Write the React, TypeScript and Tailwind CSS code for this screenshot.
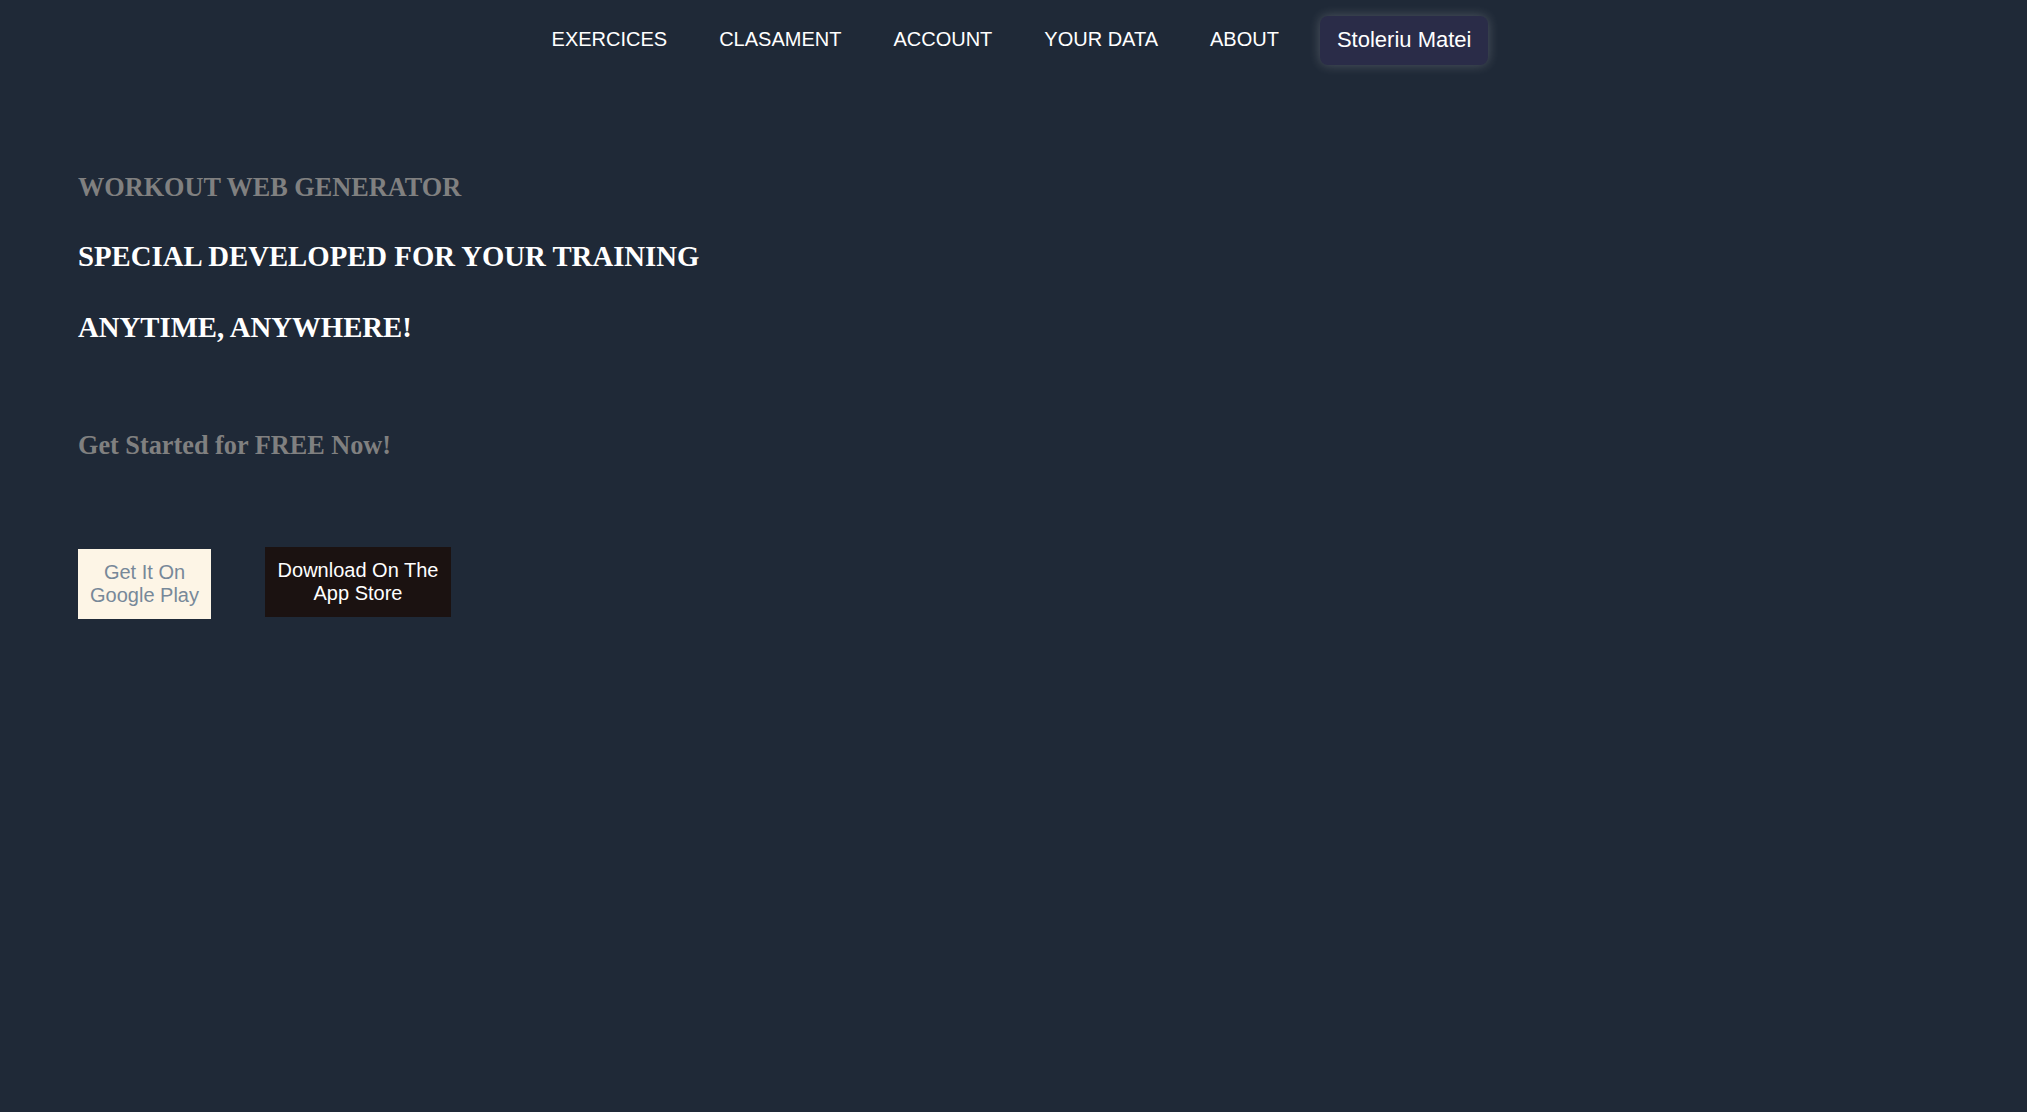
const links = ['EXERCICES', 'CLASAMENT', 'ACCOUNT', 'YOUR DATA', 'ABOUT'];

function Navbar() {
  return (
    <nav className="flex h-20 items-center justify-center font-['Liberation_Sans',Arial,sans-serif]">
      {links.map((link) => (
        <a key={link} href="#" className="px-[26px] pb-[2px] text-[20px] text-white">
          {link}
        </a>
      ))}
      <button
        type="button"
        className="ml-[15px] mr-[13px] rounded-lg bg-[#2a2c48] px-[17px] pt-[7px] pb-[9px] text-[22px] text-white shadow-[0_0_12px_rgba(255,255,255,0.22)]"
      >
        Stoleriu Matei
      </button>
    </nav>
  );
}

function Hero() {
  return (
    <main className="px-[78px] pt-[93px] font-['Liberation_Serif','Times_New_Roman',serif] font-bold">
      <h3 className="text-[26.25px] leading-[30px] text-[#808080]">
        WORKOUT WEB GENERATOR
      </h3>
      <h1 className="mt-[37px] text-[28.75px] leading-[33px] text-white">
        SPECIAL DEVELOPED FOR YOUR TRAINING
      </h1>
      <h1 className="mt-[38px] text-[28.75px] leading-[33px] text-white">
        ANYTIME, ANYWHERE!
      </h1>
      <p className="mt-[87px] text-[26.25px] leading-[30px] text-[#808080]">
        Get Started for FREE Now!
      </p>
      {/* store buttons */}
      <div className="mt-[86px] flex items-start gap-[54px] font-['Liberation_Sans',Arial,sans-serif] font-normal">
        <button
          type="button"
          className="mt-[2px] w-[133px] bg-[#fdf5e6] py-3 text-[20px] leading-[23px] text-[#778899]"
        >
          Get It On
          <br />
          Google Play
        </button>
        <button
          type="button"
          className="w-[186px] bg-[#1b1211] py-3 text-[20px] leading-[23px] text-white"
        >
          Download On The
          <br />
          App Store
        </button>
      </div>
    </main>
  );
}

export default function App() {
  return (
    <div className="min-h-screen bg-[#1f2937]">
      <Navbar />
      <Hero />
    </div>
  );
}
